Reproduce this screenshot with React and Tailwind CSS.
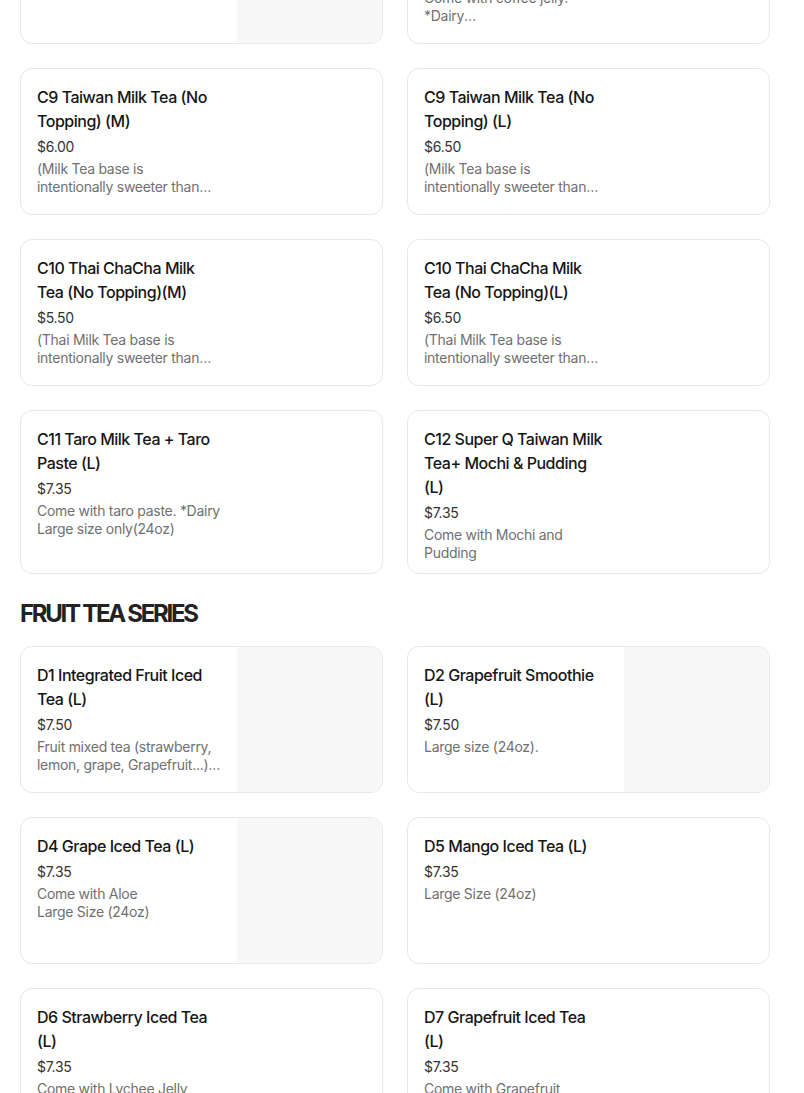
const font = { fontFamily: "Inter, 'Noto Sans', sans-serif" }

const milkTea = [
  {
    name: "C8 Coffee Jelly Milk Tea (M)",
    price: "$6.50",
    image: true,
  },
  {
    name: "C8 Coffee Jelly Milk Tea (L)",
    price: "$7.00",
    desc: "Come with coffee jelly.\n*Dairy\nLarge size (24oz)",
  },
  {
    name: "C9 Taiwan Milk Tea (No Topping) (M)",
    price: "$6.00",
    desc: "(Milk Tea base is intentionally sweeter than regular sugar level)",
  },
  {
    name: "C9 Taiwan Milk Tea (No Topping) (L)",
    price: "$6.50",
    desc: "(Milk Tea base is intentionally sweeter than regular sugar level)",
  },
  {
    name: "C10 Thai ChaCha Milk Tea (No Topping)(M)",
    price: "$5.50",
    desc: "(Thai Milk Tea base is intentionally sweeter than regular sugar level)",
  },
  {
    name: "C10 Thai ChaCha Milk Tea (No Topping)(L)",
    price: "$6.50",
    desc: "(Thai Milk Tea base is intentionally sweeter than regular sugar level)",
  },
  {
    name: "C11 Taro Milk Tea + Taro Paste (L)",
    price: "$7.35",
    desc: "Come with taro paste. *Dairy\nLarge size only(24oz)",
  },
  {
    name: "C12 Super Q Taiwan Milk Tea+ Mochi & Pudding (L)",
    price: "$7.35",
    desc: "Come with Mochi and Pudding",
  },
]

const fruitTea = [
  {
    name: "D1 Integrated Fruit Iced Tea (L)",
    price: "$7.50",
    desc: "Fruit mixed tea (strawberry, lemon, grape, Grapefruit...) Large size (24oz)",
    image: true,
  },
  {
    name: "D2 Grapefruit Smoothie (L)",
    price: "$7.50",
    desc: "Large size (24oz).",
    image: true,
  },
  {
    name: "D4 Grape Iced Tea (L)",
    price: "$7.35",
    desc: "Come with Aloe\nLarge Size (24oz)",
    image: true,
  },
  {
    name: "D5 Mango Iced Tea (L)",
    price: "$7.35",
    desc: "Large Size (24oz)",
  },
  {
    name: "D6 Strawberry Iced Tea (L)",
    price: "$7.35",
    desc: "Come with Lychee Jelly\nLarge Size (24oz)",
  },
  {
    name: "D7 Grapefruit Iced Tea (L)",
    price: "$7.35",
    desc: "Come with Grapefruit\nLarge Size (24oz)",
  },
]

function ItemCard({ item }) {
  return (
    <div className="flex min-h-[147px] overflow-hidden rounded-xl border border-[#e8e8e8] bg-white">
      <div className="w-[216px] shrink-0 px-4 pb-[11px] pt-4">
        <div className="text-[16px] font-medium leading-6 tracking-[-0.03em] text-[#161616]">{item.name}</div>
        <div className="mt-1 text-[14px] leading-5 tracking-[-0.02em] text-[#333]">{item.price}</div>
        {item.desc && (
          <div className="mt-[3px] line-clamp-2 whitespace-pre-line text-[14px] leading-[18px] tracking-[-0.02em] text-[#707070]">
            {item.desc}
          </div>
        )}
      </div>
      <div className="flex-1" />
      {item.image && <div className="w-[145px] shrink-0 self-stretch bg-[#f7f7f7]" />}
    </div>
  )
}

export default function App() {
  return (
    <main className="h-[1093px] overflow-hidden bg-white" style={font}>
      <div className="-mt-[103px] w-[770px] pl-5">
        <div className="grid grid-cols-2 gap-6">
          {milkTea.map((item) => (
            <ItemCard key={item.name} item={item} />
          ))}
        </div>
        <h2 className="mb-4 mt-6 text-[24px] font-bold leading-8 tracking-[-0.095em] text-[#222]">
          FRUIT TEA SERIES
        </h2>
        <div className="grid grid-cols-2 gap-6">
          {fruitTea.map((item) => (
            <ItemCard key={item.name} item={item} />
          ))}
        </div>
      </div>
    </main>
  )
}
